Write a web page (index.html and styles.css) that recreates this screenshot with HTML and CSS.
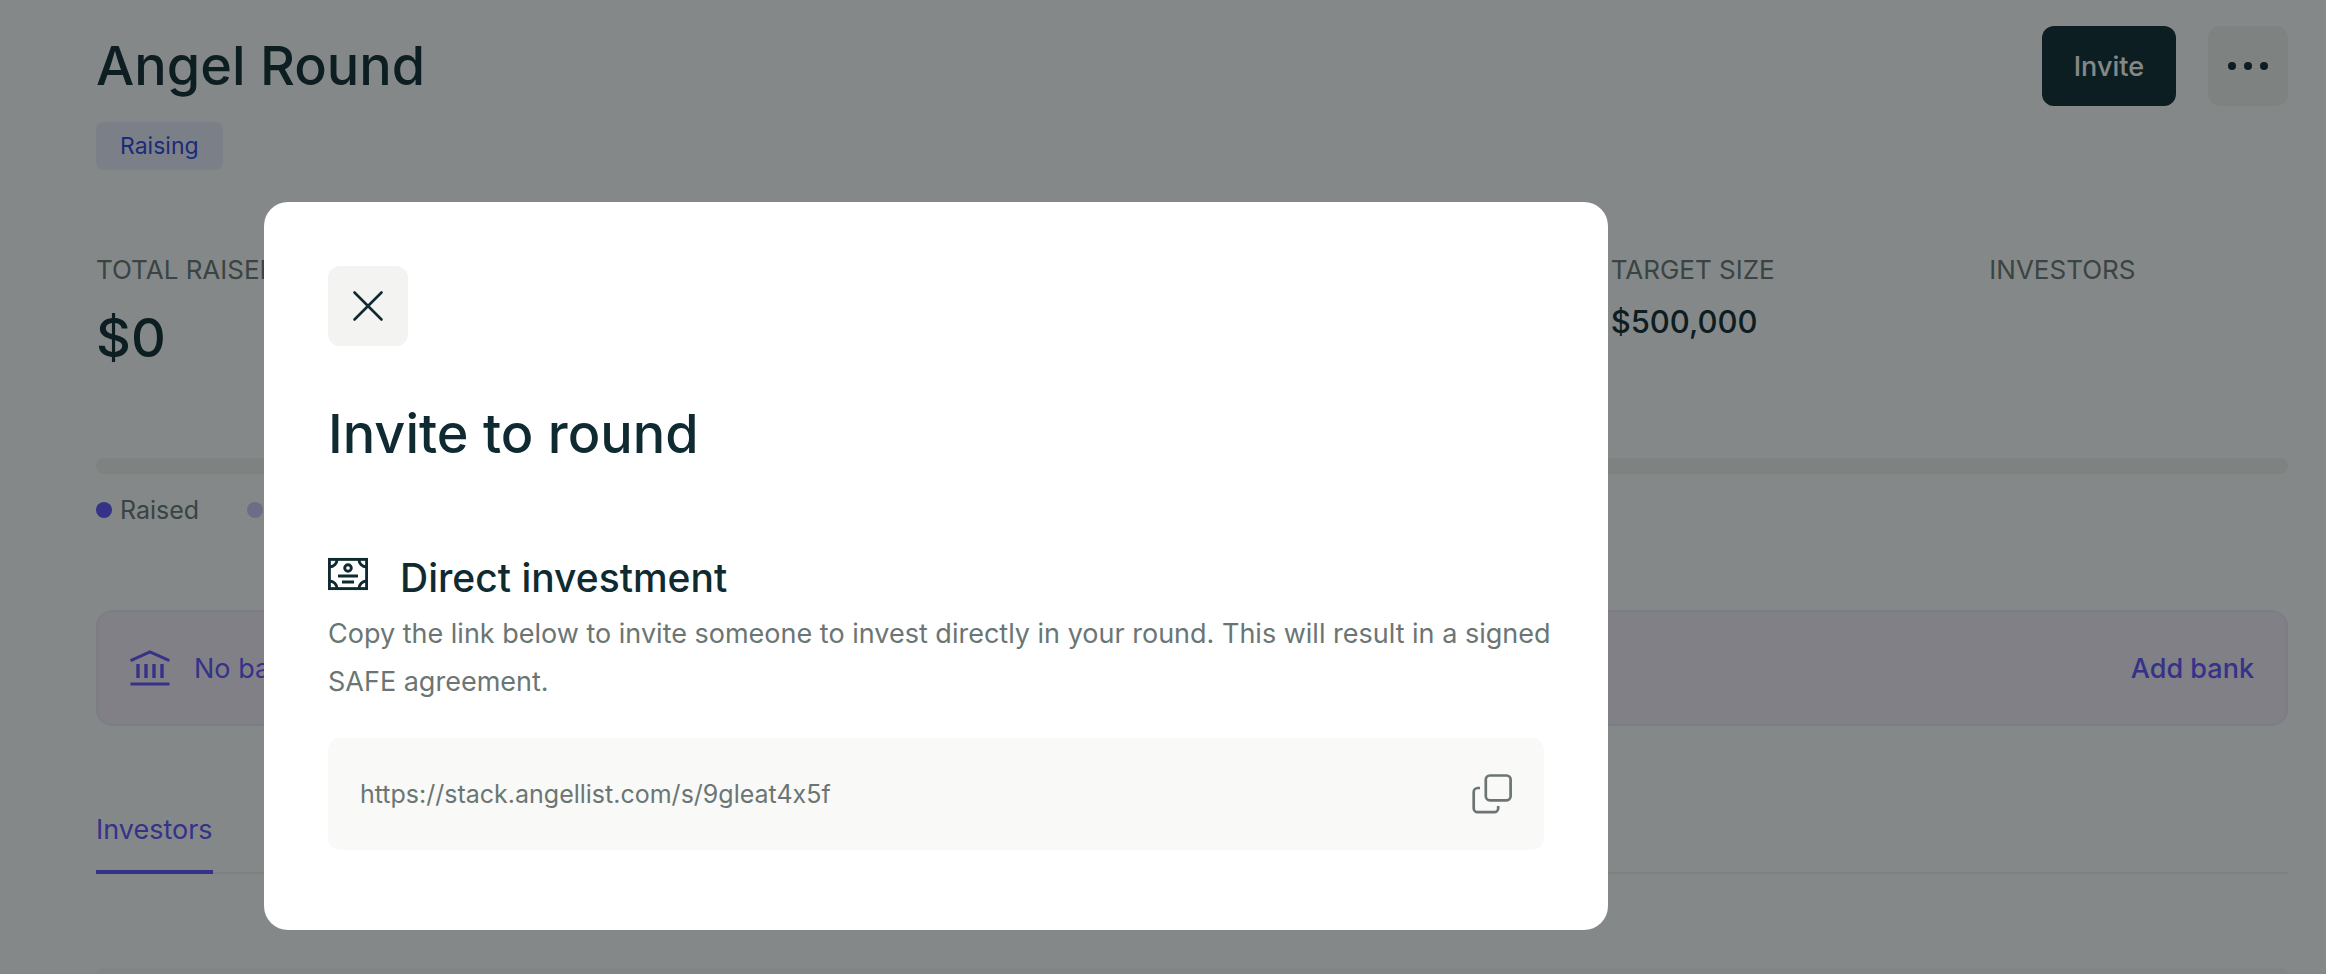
FILE: index.html
```html
<!DOCTYPE html>
<html lang="en">
<head>
    <meta charset="UTF-8">
    <meta name="viewport" content="width=device-width, initial-scale=1.0">
    <title>Angel Round</title>
    <link rel="stylesheet" href="styles.css">
</head>
<body>
    <main class="page">
        <header class="page-header">
            <div>
                <h1>Angel Round</h1>
                <span class="badge">Raising</span>
            </div>
            <div class="actions">
                <button type="button" class="btn btn-dark">Invite</button>
                <button type="button" class="btn btn-icon" aria-label="More options">
                    <svg width="40" height="8" viewBox="0 0 40 8" fill="currentColor">
                        <circle cx="4" cy="4" r="4"/>
                        <circle cx="20" cy="4" r="4"/>
                        <circle cx="36" cy="4" r="4"/>
                    </svg>
                </button>
            </div>
        </header>

        <section class="stats">
            <div class="stat stat-main">
                <div class="stat-label">TOTAL RAISED</div>
                <div class="stat-total">$0</div>
            </div>
            <div class="stat">
                <div class="stat-label">TARGET SIZE</div>
                <div class="stat-value">$500,000</div>
            </div>
            <div class="stat">
                <div class="stat-label">INVESTORS</div>
            </div>
        </section>

        <div class="progress"></div>
        <ul class="legend">
            <li><span class="dot"></span>Raised</li>
            <li><span class="dot dot-light"></span></li>
        </ul>

        <section class="bank">
            <svg width="40" height="40" viewBox="0 0 40 40" fill="none" stroke="currentColor" stroke-width="3">
                <path d="M.6 12.6 20 4l19.400 8.600"/>
                <path d="M8 16v14M16 16v14M24 16v14M32 16v14" stroke-width="3.4"/>
                <path d="M.5 36h39"/>
            </svg>
            <span>No bank</span>
            <a href="#" class="bank-link">Add bank</a>
        </section>

        <nav class="tabs">
            <a href="#" class="tab">Investors</a>
        </nav>

        <section class="card"></section>
    </main>

    <div class="overlay">
        <div class="modal" role="dialog" aria-modal="true" aria-labelledby="modal-title">
            <button type="button" class="btn btn-icon" aria-label="Close">
                <svg width="32" height="32" viewBox="0 0 32 32" fill="none" stroke="currentColor" stroke-width="2.6" stroke-linecap="round">
                    <path d="M2.500 2.500l27 27M29.500 2.500l-27 27"/>
                </svg>
            </button>
            <h2 id="modal-title">Invite to round</h2>
            <div class="option">
                <svg width="40" height="40" viewBox="0 0 40 40" fill="none" stroke="currentColor" stroke-width="2.9">
                    <rect x="1.4" y="5.4" width="37.2" height="29.2"/>
                    <path d="M9 5.500a7.500 7.500 0 0 1-7.500 7.500M31 5.500a7.500 7.500 0 0 0 7.500 7.500M9 34.500a7.500 7.500 0 0 0-7.500-7.500M31 34.500a7.500 7.500 0 0 1 7.500-7.500"/>
                    <circle cx="20" cy="14" r="3.3"/>
                    <path d="M10 22h20M14 28h12"/>
                </svg>
                <h3>Direct investment</h3>
            </div>
            <p>Copy the link below to invite someone to invest directly in your round. This will result in a signed SAFE agreement.</p>
            <div class="link-box">
                <input type="text" value="https://stack.angellist.com/s/9gleat4x5f" aria-label="Invite link" readonly>
                <button type="button" class="copy" aria-label="Copy link">
                    <svg width="40" height="40" viewBox="0 0 40 40" fill="none" stroke="currentColor" stroke-width="2.7">
                        <rect x="13.800" y="1.500" width="24.800" height="24.800" rx="4"/>
                        <path d="M8 14H5.700a4 4 0 0 0-4 4v16.200a4 4 0 0 0 4 4h16.500a4 4 0 0 0 4-4V32"/>
                    </svg>
                </button>
            </div>
        </div>
    </div>
</body>
</html>
```
FILE: styles.css
```css
* {
    box-sizing: border-box;
}
body {
    font-family: Inter, "Liberation Sans", sans-serif;
    font-feature-settings: "calt" 0;
    background-color: #ffffff;
    color: #0f2a30;
    margin: 0;
}
h1, h2, h3, p, ul {
    margin: 0;
    padding: 0;
}
svg {
    display: block;
    flex-shrink: 0;
}
a {
    text-decoration: none;
}
button, input {
    font-family: inherit;
    font-feature-settings: inherit;
}
.page {
    display: flex;
    flex-direction: column;
    min-height: 100vh;
    padding: 26px 38px 0 96px;
}
.page-header {
    display: flex;
    justify-content: space-between;
    align-items: flex-start;
    margin-bottom: 84px;
}
h1, h2 {
    font-size: 54px;
    font-weight: 500;
    line-height: 80px;
}
.badge {
    display: block;
    width: fit-content;
    margin-top: 16px;
    padding: 0 24px;
    border-radius: 8px;
    background-color: #ededff;
    color: #2f45df;
    font-size: 23px;
    line-height: 48px;
}
.actions {
    display: flex;
    gap: 32px;
}
.btn {
    display: flex;
    align-items: center;
    justify-content: center;
    height: 80px;
    padding: 0 32px;
    border: none;
    border-radius: 12px;
    cursor: pointer;
}
.btn-dark {
    background-color: #0f2a30;
    color: #ffffff;
    font-size: 27px;
    font-weight: 500;
}
.btn-icon {
    width: 80px;
    padding: 0;
    background-color: #f3f3f1;
    color: #0f2a30;
}
.stats {
    display: grid;
    grid-template-columns: repeat(6, 1fr);
    gap: 80px;
    margin-bottom: 84px;
}
.stat-main {
    grid-column: span 4;
}
.stat-label {
    color: #6b7674;
    font-size: 26px;
    line-height: 32px;
    margin-bottom: 16px;
}
.stat-total {
    font-size: 54px;
    font-weight: 500;
    line-height: 72px;
}
.stat-value {
    font-size: 31px;
    font-weight: 500;
    line-height: 40px;
}
.progress {
    height: 16px;
    border-radius: 8px;
    background-color: #f3f3f1;
}
.legend {
    display: flex;
    gap: 48px;
    margin: 20px 0 84px;
    list-style: none;
    color: #6b7674;
    font-size: 25px;
    line-height: 32px;
}
.legend li {
    display: flex;
    align-items: center;
    gap: 8px;
}
.dot {
    width: 16px;
    height: 16px;
    border-radius: 50%;
    background-color: #6152ff;
}
.dot-light {
    background-color: #d0c8ff;
}
.bank {
    display: flex;
    align-items: center;
    gap: 24px;
    height: 116px;
    padding: 0 32px;
    border: 2px solid #edeafb;
    border-radius: 16px;
    background-color: #f6effb;
    color: #6152ff;
    font-size: 27px;
}
.bank-link {
    margin-left: auto;
    color: #6152ff;
    font-weight: 500;
}
.tabs {
    display: flex;
    margin-top: 84px;
    box-shadow: inset 0 -2px #f3f3f1;
}
.tab {
    padding-bottom: 20px;
    border-bottom: 4px solid #6152ff;
    color: #6152ff;
    font-size: 27px;
    line-height: 40px;
}
.card {
    flex: 1;
    margin-top: 94px;
    border-radius: 16px 16px 0 0;
    background-color: #f9f9f7;
}
.overlay {
    position: fixed;
    inset: 0;
    padding: 202px 44px 44px 264px;
    background-color: rgba(9, 17, 17, 0.5);
}
.modal {
    max-width: 1344px;
    padding: 64px 64px 80px;
    border-radius: 24px;
    background-color: #ffffff;
}
h2 {
    margin: 48px 0 80px;
}
.option {
    display: flex;
    align-items: flex-start;
    gap: 32px;
    margin-bottom: 8px;
}
h3 {
    font-size: 39px;
    font-weight: 500;
    line-height: 48px;
}
.modal p {
    margin-right: -16px;
    color: #6b7674;
    font-size: 27px;
    line-height: 48px;
}
.link-box {
    display: flex;
    align-items: center;
    height: 112px;
    margin-top: 32px;
    padding: 0 32px;
    border-radius: 12px;
    background-color: #f9f9f7;
    color: #6b7674;
}
.link-box input {
    flex: 1;
    padding: 0;
    border: none;
    background: none;
    color: inherit;
    font-size: 25px;
}
.copy {
    padding: 0;
    border: none;
    background: none;
    color: inherit;
    cursor: pointer;
}
```
